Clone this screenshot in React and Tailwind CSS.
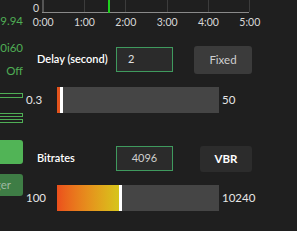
import React from 'react';

const ticks = ['0:00', '1:00', '2:00', '3:00', '4:00', '5:00'];

function Slider({ min, max, fill, fillClass }) {
  return (
    <div className="flex h-[26px] items-center">
      <div className="w-[34px] shrink-0 pl-[3px] text-[11.5px] text-[#e6e6e6]">{min}</div>
      <div className="flex h-[26px] w-[162px] shrink-0 bg-[#454545]">
        <div className={`h-full ${fillClass}`} style={{ width: fill }} />
        <div className="h-full w-[3px] bg-white" />
      </div>
      <div className="ml-[3px] text-[11.5px] text-[#e6e6e6]">{max}</div>
    </div>
  );
}

export default function App() {
  return (
    <div
      className="flex h-[231px] w-[297px] overflow-hidden bg-[#1f1f1f]"
      style={{ fontFamily: 'Lato, "Noto Sans", sans-serif' }}
    >
      {/* left column, cut off by the crop */}
      <div className="flex w-[23px] shrink-0 flex-col items-end overflow-hidden text-[11.5px] leading-none text-[#4fae55]">
        <div className="mt-[15px] whitespace-nowrap">59.94</div>
        <div className="mt-[15px] whitespace-nowrap">30i60</div>
        <div className="mt-[12px] whitespace-nowrap">Off</div>
        <div className="mt-[16px] h-[5px] w-[40px] shrink-0 border border-[#4fae55]" />
        <div className="mt-[15px] h-[4px] w-[40px] shrink-0 border border-[#4fae55]" />
        <div className="mt-[2px] h-[4px] w-[40px] shrink-0 border border-[#4fae55]" />
        <div className="mt-[17px] flex h-[24px] w-[40px] shrink-0 items-start rounded-[3px] bg-[#51b456] pl-[4px] pt-[6px]">
          <div className="h-0 w-0 border-l-[4px] border-r-[4px] border-t-[5px] border-l-transparent border-r-transparent border-t-white" />
        </div>
        <div className="mt-[10px] flex h-[22px] w-[40px] shrink-0 items-center justify-end rounded-[3px] bg-[#3e7d45] pr-[12px] text-[11.5px] text-[#9fb9a2]">
          Trigger
        </div>
      </div>

      <div className="flex flex-1 flex-col">
        {/* chart */}
        <div className="flex h-[13px] items-end">
          <div className="w-[17px] pl-[10px] text-[10.5px] leading-none text-[#d8d8d8]">0</div>
          <svg width="210" height="13" className="shrink-0" style={{ marginLeft: 2 }}>
            <line x1="1" y1="0" x2="1" y2="13" stroke="#8a8a8a" strokeWidth="1" />
            {[42, 83, 125, 166, 207].map((x) => (
              <line key={x} x1={x + 0.5} y1="0" x2={x + 0.5} y2="12" stroke="#3c3c3c" strokeWidth="1" />
            ))}
            <line x1="0" y1="12.5" x2="207" y2="12.5" stroke="#8a8a8a" strokeWidth="1" />
            <rect x="66" y="0" width="2" height="13" fill="#1fd01f" />
          </svg>
        </div>
        <div className="ml-[-0.5px] mt-[4px] grid w-[248px] grid-cols-6 text-center text-[10.5px] leading-none text-[#d8d8d8]">
          {ticks.map((t) => (
            <div key={t}>{t}</div>
          ))}
        </div>

        {/* delay */}
        <div className="mt-[18px] flex h-[28px] items-center">
          <div className="w-[93px] shrink-0 pl-[14px] text-[11px] font-semibold whitespace-nowrap text-white">Delay (second)</div>
          <div className="flex h-[25px] w-[57px] shrink-0 items-center border border-[#3f9a5e] bg-[#2b2b2b] pl-[11px] text-[11px] text-[#e0e0e0]">
            2
          </div>
          <div className="ml-[21px] flex h-[28px] w-[58px] items-center justify-center rounded-[3px] bg-[#3b3b3b] text-[11.5px] text-[#d0d0d0]">
            Fixed
          </div>
        </div>

        <div className="mt-[13px]">
          <Slider min="0.3" max="50" fill="3px" fillClass="bg-[#e4541d]" />
        </div>

        {/* bitrates */}
        <div className="mt-[33px] flex h-[26px] items-center">
          <div className="w-[93px] shrink-0 pl-[14px] text-[11px] font-semibold text-white">Bitrates</div>
          <div className="flex h-[25px] w-[57px] shrink-0 items-center justify-center border border-[#3f9a5e] bg-[#2b2b2b] text-[11px] text-[#cfcfcf]">
            4096
          </div>
          <div className="ml-[27px] flex h-[26px] w-[52px] items-center justify-center rounded-[3px] bg-[#2c2c2c] text-[11.5px] font-bold text-white">
            VBR
          </div>
        </div>

        <div className="mt-[13px]">
          <Slider min="100" max="10240" fill="62px" fillClass="bg-gradient-to-r from-[#eb4f1c] to-[#d6c51b]" />
        </div>
      </div>
    </div>
  );
}
